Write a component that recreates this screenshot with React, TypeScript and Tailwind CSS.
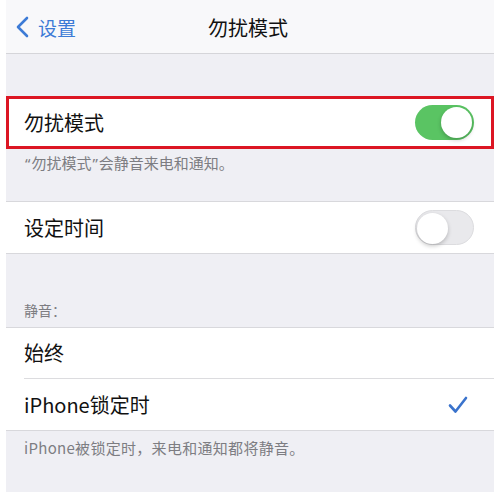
const FONT = '"Noto Sans CJK SC", "Noto Sans", sans-serif'

function Toggle({ on }: { on: boolean }) {
  return (
    <div
      className={`relative h-[35px] w-[59px] rounded-full ${
        on ? 'bg-[#5ac463]' : 'bg-[#e9e9ec] border border-[#dcdcdf]'
      }`}
    >
      <div
        className={`absolute top-[2px] h-[31px] w-[31px] rounded-full bg-white shadow-[0_2px_4px_rgba(0,0,0,0.22)] ${
          on ? 'right-[2px]' : 'left-[1px] top-[1px]'
        }`}
      />
    </div>
  )
}

const Quote = ({ c }: { c: string }) => (
  <span className="mx-[1px] font-['Noto_Sans']">{c}</span>
)

export default function App() {
  return (
    <div className="flex h-[492px] w-[500px] bg-white px-[6px] overflow-hidden" style={{ fontFamily: FONT }}>
      <div className="flex w-[488px] flex-col bg-[#efeff4]">
        {/* Nav bar */}
        <div className="relative flex h-[54px] shrink-0 items-center border-b border-[#d5d5d9] bg-[#f8f8fa]">
          <div className="flex items-center gap-[9px] pl-[9px] pt-[1px] text-[#3d7bd6]">
            <svg width="14" height="22" viewBox="0 0 14 22" fill="none">
              <polyline points="12,2 3,11 12,20" stroke="#3d7bd6" strokeWidth="2.6" strokeLinecap="round" strokeLinejoin="round" />
            </svg>
            <span className="text-[19px] leading-none">设置</span>
          </div>
          <div className="absolute inset-x-0 pt-[2px] pr-[4px] text-center text-[20px] leading-none text-[#111]">勿扰模式</div>
        </div>

        <div className="h-[42px] shrink-0" />

        {/* Highlighted row */}
        <div className="flex h-[53px] shrink-0 items-center justify-between border-[3px] border-[#dc1623] bg-white pl-[15px] pr-[17px]">
          <span className="text-[20px] leading-none text-[#111]">勿扰模式</span>
          <Toggle on />
        </div>
        <div className="h-[52px] shrink-0 pl-[18px] pt-[3px] text-[15px] leading-[22px] text-[#7d7d82]">
          <Quote c="“" />勿扰模式<Quote c="”" />会静音来电和通知。
        </div>

        <div className="flex h-[53px] shrink-0 items-center justify-between border-y border-[#d8d8dc] bg-white pl-[18px] pr-[20px]">
          <span className="text-[20px] leading-none text-[#111]">设定时间</span>
          <Toggle on={false} />
        </div>

        <div className="flex h-[73px] shrink-0 items-end pb-[7px] pl-[18px] text-[14px] leading-[20px] text-[#7d7d82]">
          静音：
        </div>

        <div className="shrink-0 border-y border-[#d8d8dc] bg-white">
          <div className="ml-[18px] flex h-[51px] items-center border-b border-[#dcdcdf] text-[20px] leading-none text-[#111]">
            始终
          </div>
          <div className="flex h-[51px] items-center justify-between pl-[18px] pr-[26px] text-[20px] leading-none text-[#111]">
            <span>iPhone锁定时</span>
            <svg width="20" height="18" viewBox="0 0 20 18" fill="none">
              <polyline points="2,9.5 7.5,15.5 18,2" stroke="#3a73cc" strokeWidth="2.6" strokeLinecap="round" strokeLinejoin="round" />
            </svg>
          </div>
        </div>

        <div className="pl-[18px] pt-[6px] text-[15px] leading-[22px] tracking-[0.3px] text-[#7d7d82]">
          iPhone被锁定时，来电和通知都将静音。
        </div>
      </div>
    </div>
  )
}
